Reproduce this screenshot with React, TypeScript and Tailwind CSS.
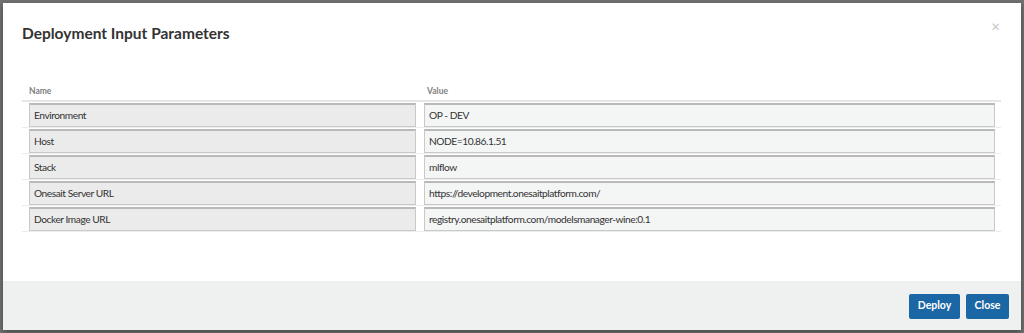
const rows = [
  { name: "Environment", value: "OP - DEV" },
  { name: "Host", value: "NODE=10.86.1.51" },
  { name: "Stack", value: "mlflow" },
  { name: "Onesait Server URL", value: "https://development.onesaitplatform.com/" },
  { name: "Docker Image URL", value: "registry.onesaitplatform.com/modelsmanager-wine:0.1" },
];

function Field({ text, readOnly }: { text: string; readOnly?: boolean }) {
  return (
    <div
      className={`h-[24px] flex items-center pl-[4px] border border-[#c9c9c9] border-t-2 border-t-[#b9b9b9] text-[10.2px] text-[#333] tracking-[-0.45px] ${
        readOnly ? "bg-[#ebebeb]" : "bg-[#f4f5f5]"
      }`}
    >
      {text}
    </div>
  );
}

export default function App() {
  return (
    <div
      className="w-[1024px] h-[333px] bg-[#727272] p-[3px] overflow-hidden"
      style={{ fontFamily: "Lato, 'Open Sans', sans-serif" }}
    >
      <div className="h-[327px] bg-white flex flex-col shadow-[0_2px_6px_rgba(0,0,0,0.4)]">
        <div className="flex-1">
          {/* header */}
          <div className="flex items-start justify-between pl-[19px] pr-[21px] pt-[20px]">
            <h2 className="text-[15.5px] leading-[20px] font-bold text-[#333]">
              Deployment Input Parameters
            </h2>
            <button className="text-[#c5c5c5] text-[15px] leading-none mt-[-4px]">×</button>
          </div>

          {/* table */}
          <div className="mt-[39px] ml-[19px] mr-[20px]">
            <div className="flex h-[20px] items-center border-b-2 border-[#e6e6e6] text-[8.5px] font-bold text-[#808080]">
              <div className="w-[398px] pl-[7px]">Name</div>
              <div className="flex-1 pl-[7px]">Value</div>
            </div>
            {rows.map((r) => (
              <div key={r.name} className="flex h-[26px] items-start pt-[1px] border-b border-[#ececec]">
                <div className="w-[398px] pl-[7px] pr-[4px]">
                  <Field text={r.name} readOnly />
                </div>
                <div className="flex-1 pl-[4px] pr-[6px]">
                  <Field text={r.value} />
                </div>
              </div>
            ))}
          </div>
        </div>

        {/* footer */}
        <div className="h-[49px] bg-[#eff0f0] flex items-center justify-end gap-[6px] pr-[12px] pt-[1px]">
          <button className="h-[25px] w-[51px] rounded-[2px] bg-[#1b67a6] text-white text-[10.5px] font-bold">
            Deploy
          </button>
          <button className="h-[25px] w-[43px] rounded-[2px] bg-[#1b67a6] text-white text-[10.5px] font-bold">
            Close
          </button>
        </div>
      </div>
    </div>
  );
}
